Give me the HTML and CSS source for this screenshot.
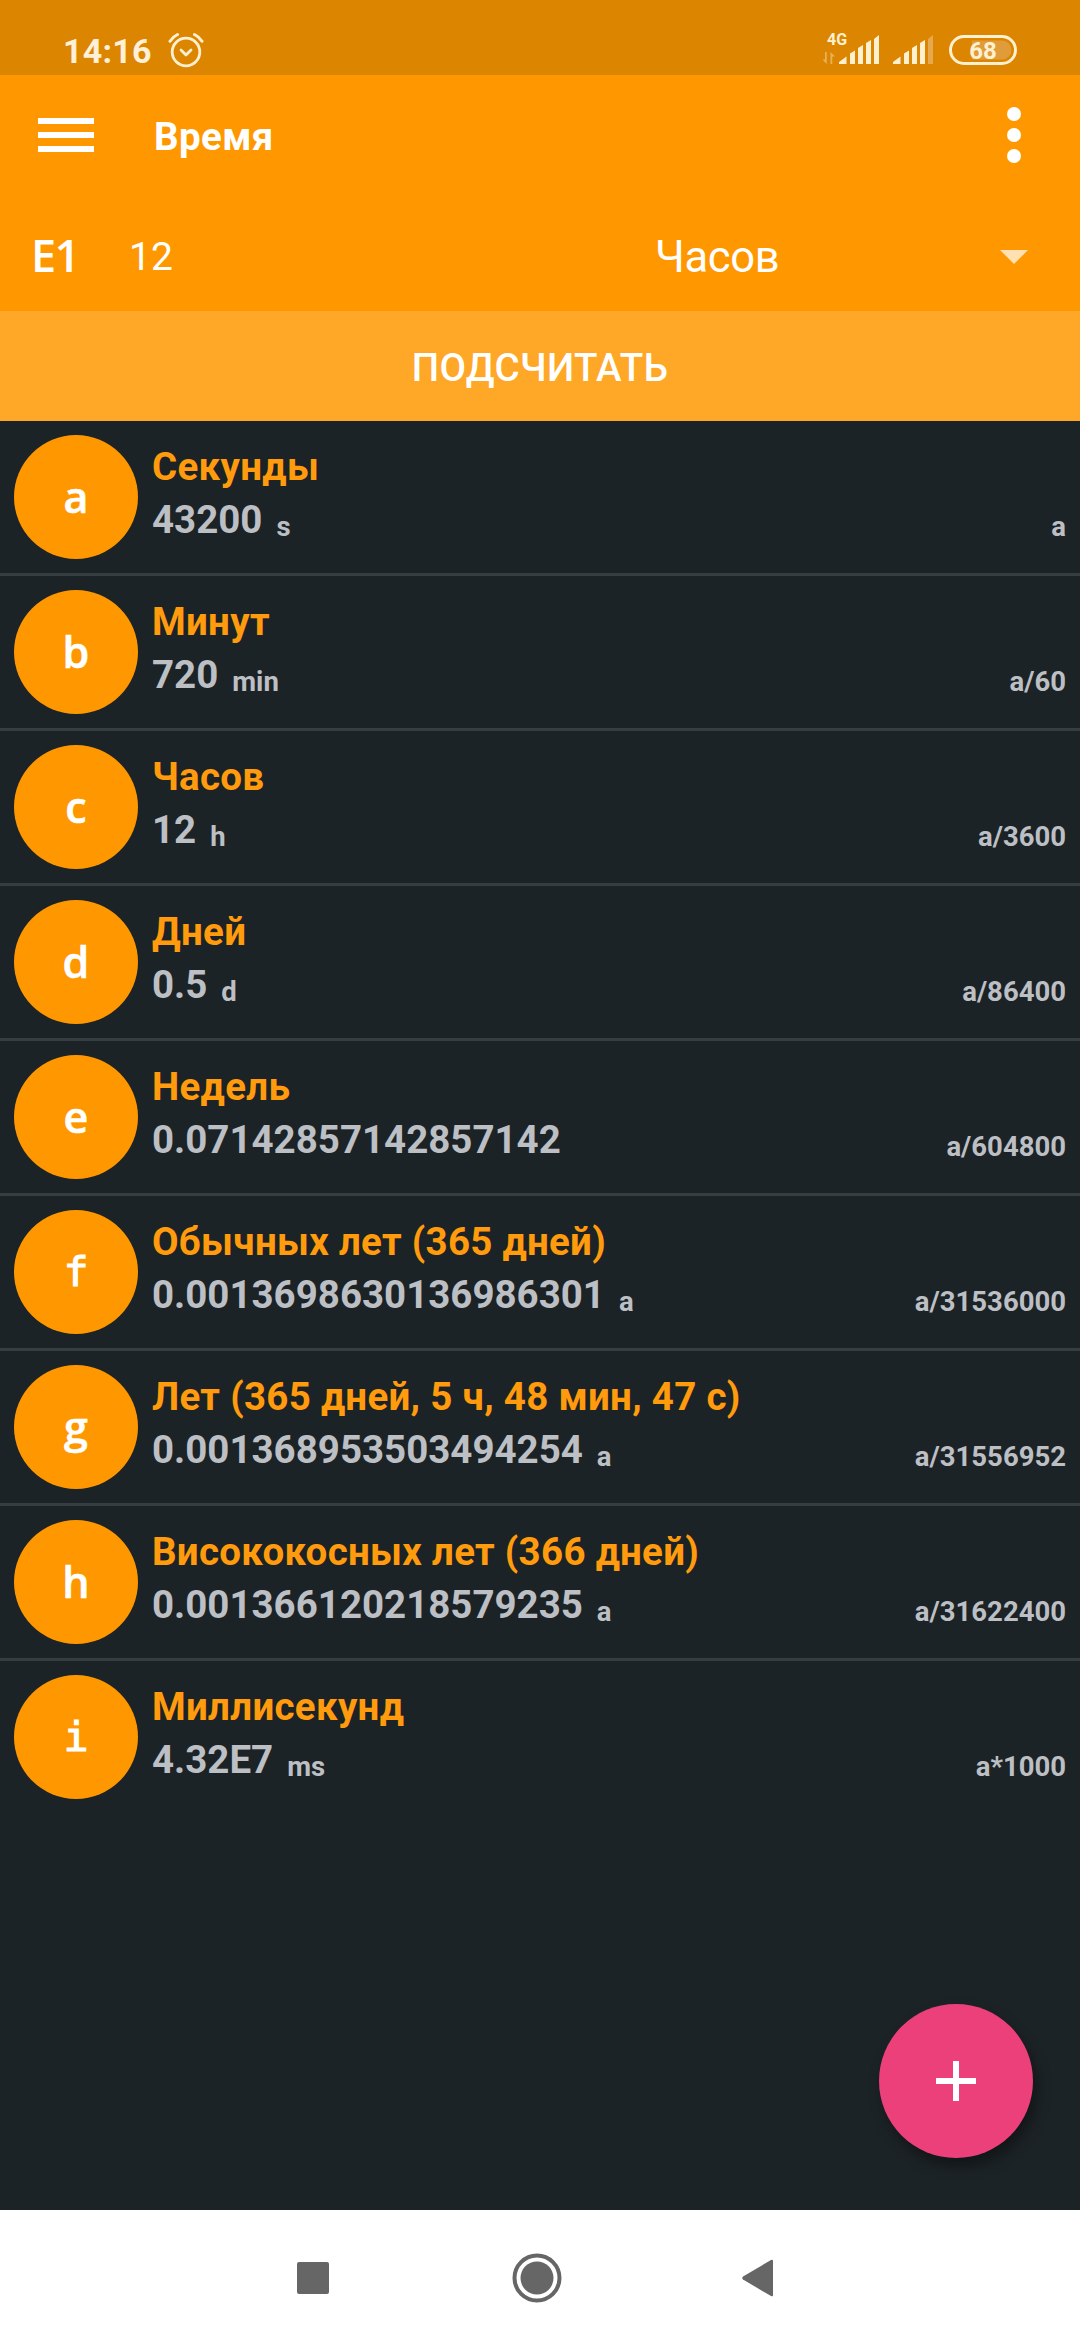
FILE: index.html
```html
<!DOCTYPE html>
<html lang="ru">
  <head>
    <meta charset="UTF-8" />
    <meta name="viewport" content="width=device-width, initial-scale=1.0" />
    <title>Время</title>
    <link rel="stylesheet" href="styles.css">
  </head>
  <body>
    <div id="container">
      <div class="status">
        <span class="clock">14:16</span>
        <svg class="alarm" width="36" height="36" viewBox="0 0 36 36" fill="none" stroke="#fff0d0" stroke-linecap="round">
          <circle cx="18" cy="20" r="13.8" stroke-width="2.8" />
          <path d="M13 18l5 5 5-5" stroke-width="2.8" stroke-linejoin="round" />
          <path d="M2 9.200Q4.500 5 9.500 2.500M34 9.200Q31.500 5 26.500 2.500" stroke-width="3" />
        </svg>
        <svg class="signal" width="200" height="44" viewBox="0 -8 200 44">
          <text class="net" x="5" y="11">4G</text>
          <path d="M4.700 18v12l-4.200-4.500h2.500v-7.500zM8.500 30v-12l4.500 4.500h-2.700v7.500z" fill="#e8b25c" />
          <path d="M17 30v-2l7.500-5.500V30zM28 30V19.500l5-3V30zM36 30V14l5-3V30zM44 30V9l5-3V30zM52 30V5l5-4V30z" fill="#fff0d0" />
          <path d="M71 30v-2l7.500-5.500V30zM82 30V19.500l5-3V30zM90 30V14l5-3V30zM98 30V9l5-3V30z" fill="#fff0d0" />
          <path d="M106 30V5l5-4V30z" fill="#e6a94e" />
          <path d="M150 6.500h30a9.500 9.500 0 0 1 0 19h-30z" fill="#e09b3a" />
          <rect x="128.500" y="2.500" width="65" height="27" rx="13.500" fill="none" stroke="#fff0d0" stroke-width="3" />
          <text class="charge" x="161" y="25">68</text>
        </svg>
      </div>
      <header class="toolbar">
        <svg width="56" height="36" viewBox="0 0 56 36" fill="#fff">
          <path d="M0 1h56v6H0zM0 15h56v6H0zM0 29h56v6H0z" />
        </svg>
        <h1>Время</h1>
        <svg class="more" width="14" height="56" viewBox="0 0 14 56" fill="#fff">
          <circle cx="7" cy="7" r="7" />
          <circle cx="7" cy="28" r="7" />
          <circle cx="7" cy="49" r="7" />
        </svg>
      </header>
      <div class="entry">
        <span class="exp">E1</span>
        <span class="amount">12</span>
        <span class="unit">Часов</span>
        <svg width="28" height="14" viewBox="0 0 28 14"><path d="M0 0h28L14 14z" fill="#ffe0b2" /></svg>
      </div>
      <button type="button" class="count">ПОДСЧИТАТЬ</button>
      <ul class="results">
        <li>
          <span class="badge">a</span>
          <div class="info">
            <h2>Секунды</h2>
            <p>43200<small>s</small></p>
          </div>
          <span class="formula">a</span>
        </li>
        <li>
          <span class="badge">b</span>
          <div class="info">
            <h2>Минут</h2>
            <p>720<small>min</small></p>
          </div>
          <span class="formula">a/60</span>
        </li>
        <li>
          <span class="badge">c</span>
          <div class="info">
            <h2>Часов</h2>
            <p>12<small>h</small></p>
          </div>
          <span class="formula">a/3600</span>
        </li>
        <li>
          <span class="badge">d</span>
          <div class="info">
            <h2>Дней</h2>
            <p>0.5<small>d</small></p>
          </div>
          <span class="formula">a/86400</span>
        </li>
        <li>
          <span class="badge">e</span>
          <div class="info">
            <h2>Недель</h2>
            <p>0.07142857142857142</p>
          </div>
          <span class="formula">a/604800</span>
        </li>
        <li>
          <span class="badge slab">f</span>
          <div class="info">
            <h2>Обычных лет (365 дней)</h2>
            <p>0.0013698630136986301<small>a</small></p>
          </div>
          <span class="formula">a/31536000</span>
        </li>
        <li>
          <span class="badge">g</span>
          <div class="info">
            <h2>Лет (365 дней, 5 ч, 48 мин, 47 с)</h2>
            <p>0.001368953503494254<small>a</small></p>
          </div>
          <span class="formula">a/31556952</span>
        </li>
        <li>
          <span class="badge">h</span>
          <div class="info">
            <h2>Висококосных лет (366 дней)</h2>
            <p>0.001366120218579235<small>a</small></p>
          </div>
          <span class="formula">a/31622400</span>
        </li>
        <li>
          <span class="badge slab">i</span>
          <div class="info">
            <h2>Миллисекунд</h2>
            <p>4.32E7<small>ms</small></p>
          </div>
          <span class="formula">a*1000</span>
        </li>
      </ul>
      <button type="button" class="add">
        <svg width="40" height="40" viewBox="0 0 40 40" fill="#fff">
          <path d="M17 0h6v17h17v6H23v17h-6V23H0v-6h17z" />
        </svg>
      </button>
      <nav class="navbar">
        <svg width="32" height="32" viewBox="0 0 32 32"><rect width="32" height="32" rx="2" /></svg>
        <svg class="home" width="50" height="50" viewBox="0 0 50 50">
          <circle cx="25" cy="25" r="22.500" fill="none" stroke="#666" stroke-width="4" />
          <circle cx="25" cy="25" r="16.500" />
        </svg>
        <svg width="32" height="38" viewBox="0 0 32 38"><path d="M29 1Q31 0 31 2V36Q31 38 29 37L1 20.500Q-.5 19 1 17.500z" /></svg>
      </nav>
    </div>
  </body>
</html>
```
FILE: styles.css
```css
* {
  padding: 0;
  margin: 0;
  box-sizing: border-box;
}
ul,
li {
  list-style: none;
}
body {
  font-family: Roboto, "Noto Sans", sans-serif;
  background: #1c2326;
}
button {
  border: none;
  font-family: inherit;
}
svg {
  display: block;
  flex: none;
}
#container {
  position: relative;
  display: flex;
  flex-direction: column;
  width: 1080px;
  height: 2340px;
}
.status {
  display: flex;
  height: 75px;
  padding: 26px 58px 0 63px;
  background: #dc8500;
}
.clock {
  width: 105px;
  margin-top: 7px;
  color: #fff0d8;
  font-size: 34px;
  font-weight: bold;
  line-height: 37px;
  letter-spacing: 0.2px;
}
.alarm {
  margin-top: 6px;
}
.signal {
  margin-left: auto;
}
.net {
  fill: #fff0d0;
  font-size: 16px;
  font-weight: bold;
}
.charge {
  fill: #fff0d0;
  font-size: 24px;
  font-weight: bold;
  text-anchor: middle;
}
.toolbar {
  display: flex;
  align-items: center;
  height: 120px;
  padding: 0 59px 0 38px;
  background: #ff9800;
  color: #fff;
}
.toolbar h1 {
  margin: 2px 0 0 60px;
  font-size: 38.5px;
  letter-spacing: 0.4px;
}
.more {
  margin-left: auto;
}
.entry {
  display: flex;
  align-items: center;
  height: 116px;
  padding: 8px 52px 0 31px;
  background: #ff9800;
  color: #fff;
}
.exp {
  width: 98px;
  margin-top: -5px;
  font-family: "Open Sans", sans-serif;
  font-size: 45px;
  font-weight: 600;
  letter-spacing: -1.5px;
}
.amount {
  width: 526px;
  font-size: 39px;
}
.unit {
  flex: 1;
  font-size: 43.5px;
  letter-spacing: -0.3px;
}
.count {
  height: 110px;
  padding-top: 2px;
  background: #ffa726;
  color: #fff;
  font-size: 38.5px;
  font-weight: 500;
  letter-spacing: 0.4px;
}
.results {
  flex: 1;
}
.results li {
  display: flex;
  height: 155px;
  padding: 14px;
  border-bottom: 3px solid #353e41;
}
.results li:last-child {
  border-color: transparent;
}
.badge {
  width: 124px;
  height: 124px;
  border-radius: 50%;
  background: #ff9800;
  color: #fff;
  font-family: "Open Sans", sans-serif;
  font-size: 43px;
  font-weight: 600;
  line-height: 124px;
  text-align: center;
  -webkit-text-stroke: 0.6px #fff;
}
.slab {
  font-family: "DejaVu Sans Mono", monospace;
  font-size: 41px;
  font-weight: normal;
  -webkit-text-stroke: 1.2px #fff;
}
.info {
  flex: 1;
  padding: 5px 0 0 14px;
}
.info h2 {
  color: #ff9b0c;
  font-size: 38.5px;
  line-height: 53px;
  letter-spacing: 0.3px;
}
.info p {
  color: #bcbfc3;
  font-size: 38.5px;
  font-weight: bold;
  line-height: 53px;
}
.info small {
  position: relative;
  top: 3px;
  margin-left: 14px;
  font-size: 27.5px;
}
.formula {
  align-self: flex-end;
  margin-bottom: 16px;
  color: #bcbfc3;
  font-size: 27.5px;
  font-weight: bold;
  line-height: 32px;
}
.add {
  position: absolute;
  right: 47px;
  bottom: 182px;
  display: flex;
  align-items: center;
  justify-content: center;
  width: 154px;
  height: 154px;
  border-radius: 50%;
  background: #ec407a;
  box-shadow: 4px 8px 14px rgba(0, 0, 0, 0.4);
}
.navbar {
  display: flex;
  align-items: center;
  height: 130px;
  padding: 6px 306px 0 297px;
  justify-content: space-between;
  background: #fff;
  fill: #666;
}
.home {
  margin-left: 3px;
}
```
